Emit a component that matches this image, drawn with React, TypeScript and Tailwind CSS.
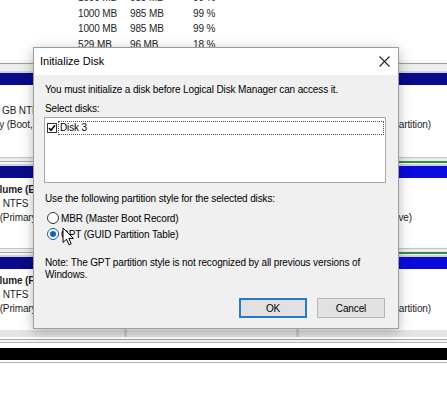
import React from "react";

const rows = [
  ["1000 MB", "985 MB", "99 %"],
  ["1000 MB", "985 MB", "99 %"],
  ["1000 MB", "985 MB", "99 %"],
  ["529 MB", "96 MB", "18 %"],
];

type DiskProps = {
  name?: string;
  nameOffset?: string;
  size: string;
  sizeOffset: string;
  status: string;
  statusOffset: string;
  right: string;
  rightPad: string;
  accent: boolean;
  contentH: string;
};

function Separator({ accent }: { accent: boolean }) {
  return (
    <div className="flex h-[11px]">
      <div className="w-[300px] flex flex-col">
        <div className="h-[2px] bg-white" />
        <div className="h-px bg-[#c4c4c4]" />
        <div className="h-[3px] bg-[#ececec]" />
        <div className="h-px bg-[#a9a9a9]" />
        <div className="h-[2px] bg-[#f4f4f4]" />
        <div className="h-[2px] bg-[#d2d2e6]" />
      </div>
      <div className="flex-1 flex flex-col">
        <div className="h-[2px] bg-white" />
        <div className="h-px bg-[#c4c4c4]" />
        <div className="h-[3px] bg-[#ececec]" />
        <div className={accent ? "h-[2px] bg-[#2f8f3a]" : "h-px bg-[#a9a9a9]"} />
        <div className={accent ? "h-px bg-[#f4f4f4]" : "h-[2px] bg-[#f4f4f4]"} />
        <div className="h-[2px] bg-[#d2d2e6]" />
      </div>
    </div>
  );
}

function DiskBlock(p: DiskProps) {
  return (
    <div>
      <div className="flex h-[12px]">
        <div className="w-[300px] bg-[#0a0a8c]" />
        <div className={p.accent ? "flex-1 bg-[#0b0bdc]" : "flex-1 bg-[#0a0a8c]"} />
      </div>
      <div className={`flex ${p.contentH} bg-white overflow-hidden`}>
        <div className="w-[124px] pt-[5px] overflow-hidden whitespace-nowrap leading-[14px]">
          <div className="h-[14px] font-bold">
            {p.name && <span className={`inline-block ${p.nameOffset}`}>{p.name}</span>}
          </div>
          <div className="h-[14px]">
            <span className={`inline-block ${p.sizeOffset}`}>{p.size}</span>
          </div>
          <div className="h-[14px]">
            <span className={`inline-block ${p.statusOffset}`}>{p.status}</span>
          </div>
        </div>
        <div className="w-[172px] border-l-[3px] border-[#dcdcdc]" />
        <div className="flex-1 border-l-[3px] border-[#dcdcdc] pt-[5px] leading-[14px] whitespace-nowrap overflow-hidden">
          <div className="h-[28px]" />
          <div className={`text-right ${p.rightPad}`}>{p.right}</div>
        </div>
      </div>
    </div>
  );
}

function Cursor() {
  return (
    <svg className="absolute left-[62px] top-[227px]" width="13" height="19" viewBox="0 0 13 19">
      <path
        d="M1 1 L1 15.5 L4.5 12.2 L7 17.8 L9.2 16.8 L6.8 11.4 L11.4 11.4 Z"
        fill="#ffffff"
        stroke="#000000"
        strokeWidth="1"
        strokeLinejoin="round"
      />
    </svg>
  );
}

function Dialog() {
  return (
    <div className="absolute left-[33px] top-[47px] w-[366px] h-[282px] border border-[#9c9c9c] bg-[#f0f0f0] shadow-[0_3px_12px_rgba(0,0,0,0.28)] flex flex-col text-black">
      <div className="h-[27px] bg-white flex items-center justify-between pl-[6px] pr-[8px]">
        <span className="text-[11px] tracking-[0px]">Initialize Disk</span>
        <svg width="11" height="11" viewBox="0 0 11 11">
          <path d="M0.5 0.5 L10.5 10.5 M10.5 0.5 L0.5 10.5" stroke="#222" strokeWidth="1.1" />
        </svg>
      </div>
      <div className="flex-1 flex flex-col pl-[10px] pr-[13px] pt-[8px] leading-[13px]">
        <div className="pl-px">You must initialize a disk before Logical Disk Manager can access it.</div>
        <div className="mt-[6px] pl-px">Select disks:</div>
        <div className="mt-[2px] w-[342px] h-[66px] border border-[#a6a6a6] bg-white pt-[3px] pl-[2px]">
          <div className="flex items-center h-[13px]">
            <div className="w-[10px] h-[10px] border border-[#333] bg-white flex items-center justify-center">
              <svg width="8" height="8" viewBox="0 0 8 8">
                <path d="M1 4 L3 6.3 L7 1.2" fill="none" stroke="#000" strokeWidth="1.5" />
              </svg>
            </div>
            <div className="ml-px flex-1 h-[14px] border border-dotted border-[#555] pl-px leading-[12px]">Disk 3</div>
            <div className="w-[1px]" />
          </div>
        </div>
        <div className="mt-[9px] pl-px">Use the following partition style for the selected disks:</div>
        <div className="mt-[5px] flex items-center h-[16px]">
          <div className="ml-[3px] w-[12px] h-[12px] rounded-full border border-[#333] bg-white" />
          <span className="ml-[2px]">MBR (Master Boot Record)</span>
        </div>
        <div className="flex items-center h-[16px]">
          <div className="ml-[3px] w-[12px] h-[12px] rounded-full border border-[#0f5fb0] bg-white flex items-center justify-center">
            <div className="w-[6px] h-[6px] rounded-full bg-[#1560b8]" />
          </div>
          <span className="ml-[2px]">GPT (GUID Partition Table)</span>
        </div>
        <div className="mt-[15px] pl-px leading-[12px]">
          Note: The GPT partition style is not recognized by all previous versions of
          <br />
          Windows.
        </div>
        <div className="mt-[17px] flex justify-end gap-[10px] pr-[0px]">
          <div className="w-[68px] h-[20px] border-2 border-[#2a78c8] bg-[#e1e1e1] flex items-center justify-center">OK</div>
          <div className="w-[68px] h-[20px] border border-[#b5b5b5] bg-[#e1e1e1] flex items-center justify-center">Cancel</div>
        </div>
      </div>
    </div>
  );
}

export default function App() {
  return (
    <div
      className="relative w-[447px] h-[393px] overflow-hidden bg-white text-[10px] tracking-[-0.13px] text-[#1e1e1e]"
      style={{ fontFamily: '"Liberation Sans", Arial, sans-serif' }}
    >
      {/* volume list */}
      <div className="h-[60px] overflow-hidden bg-white">
        <div className="mt-[-10px]">
          {rows.map((r, i) => (
            <div key={i} className="flex h-[15.5px] items-center">
              <span className="ml-[78px] w-[52px]">{r[0]}</span>
              <span className="w-[63px]">{r[1]}</span>
              <span>{r[2]}</span>
            </div>
          ))}
        </div>
      </div>

      {/* graphical view */}
      <div className="flex flex-col">
        <div className="flex flex-col h-[13px]">
          <div className="h-[3px] bg-[#f7f7f7]" />
          <div className="h-px bg-[#9e9e9e]" />
          <div className="h-[7px] bg-[#ededed]" />
          <div className="h-[2px] bg-[#d2d2e6]" />
        </div>
        <DiskBlock
          size="29.30 GB NTFS"
          sizeOffset="ml-[-25px]"
          status="Healthy (Boot, Page File, Crash Dump, Primary Partition)"
          statusOffset="ml-[-29px]"
          right="Healthy (Primary Partition)"
          rightPad="pr-[16px]"
          accent={false}
          contentH="h-[70px]"
        />
        <Separator accent={true} />
        <DiskBlock
          name="New Volume (E:)"
          nameOffset="ml-[-35px]"
          size="1000 MB NTFS"
          sizeOffset="ml-[-39px]"
          status="Healthy (Primary Partition)"
          statusOffset="ml-[-36px]"
          right="Healthy (Active)"
          rightPad="pr-[35px]"
          accent={true}
          contentH="h-[68px]"
        />
        <Separator accent={true} />
        <DiskBlock
          name="New Volume (F:)"
          nameOffset="ml-[-35px]"
          size="1000 MB NTFS"
          sizeOffset="ml-[-39px]"
          status="Healthy (Primary Partition)"
          statusOffset="ml-[-36px]"
          right="Healthy (Primary Partition)"
          rightPad="pr-[16px]"
          accent={true}
          contentH="h-[61px]"
        />
        <div className="flex flex-col">
          <div className="flex h-[7px] bg-[#e4e4e4]">
            <div className="w-[124px]" />
            <div className="w-[172px] border-l-[3px] border-[#c8c8c8]" />
            <div className="flex-1 border-l-[3px] border-[#c8c8c8]" />
          </div>
          <div className="h-[2px] bg-white" />
          <div className="h-px bg-[#a8a8a8]" />
          <div className="h-[2px] bg-[#f2f2f2]" />
          <div className="h-px bg-[#b8b8b8]" />
          <div className="h-[5px] bg-white" />
          <div className="h-[12px] bg-black" />
          <div className="h-[2px] bg-white" />
          <div className="h-px bg-[#b0b0b0]" />
        </div>
      </div>

      <Dialog />
      <Cursor />
    </div>
  );
}
